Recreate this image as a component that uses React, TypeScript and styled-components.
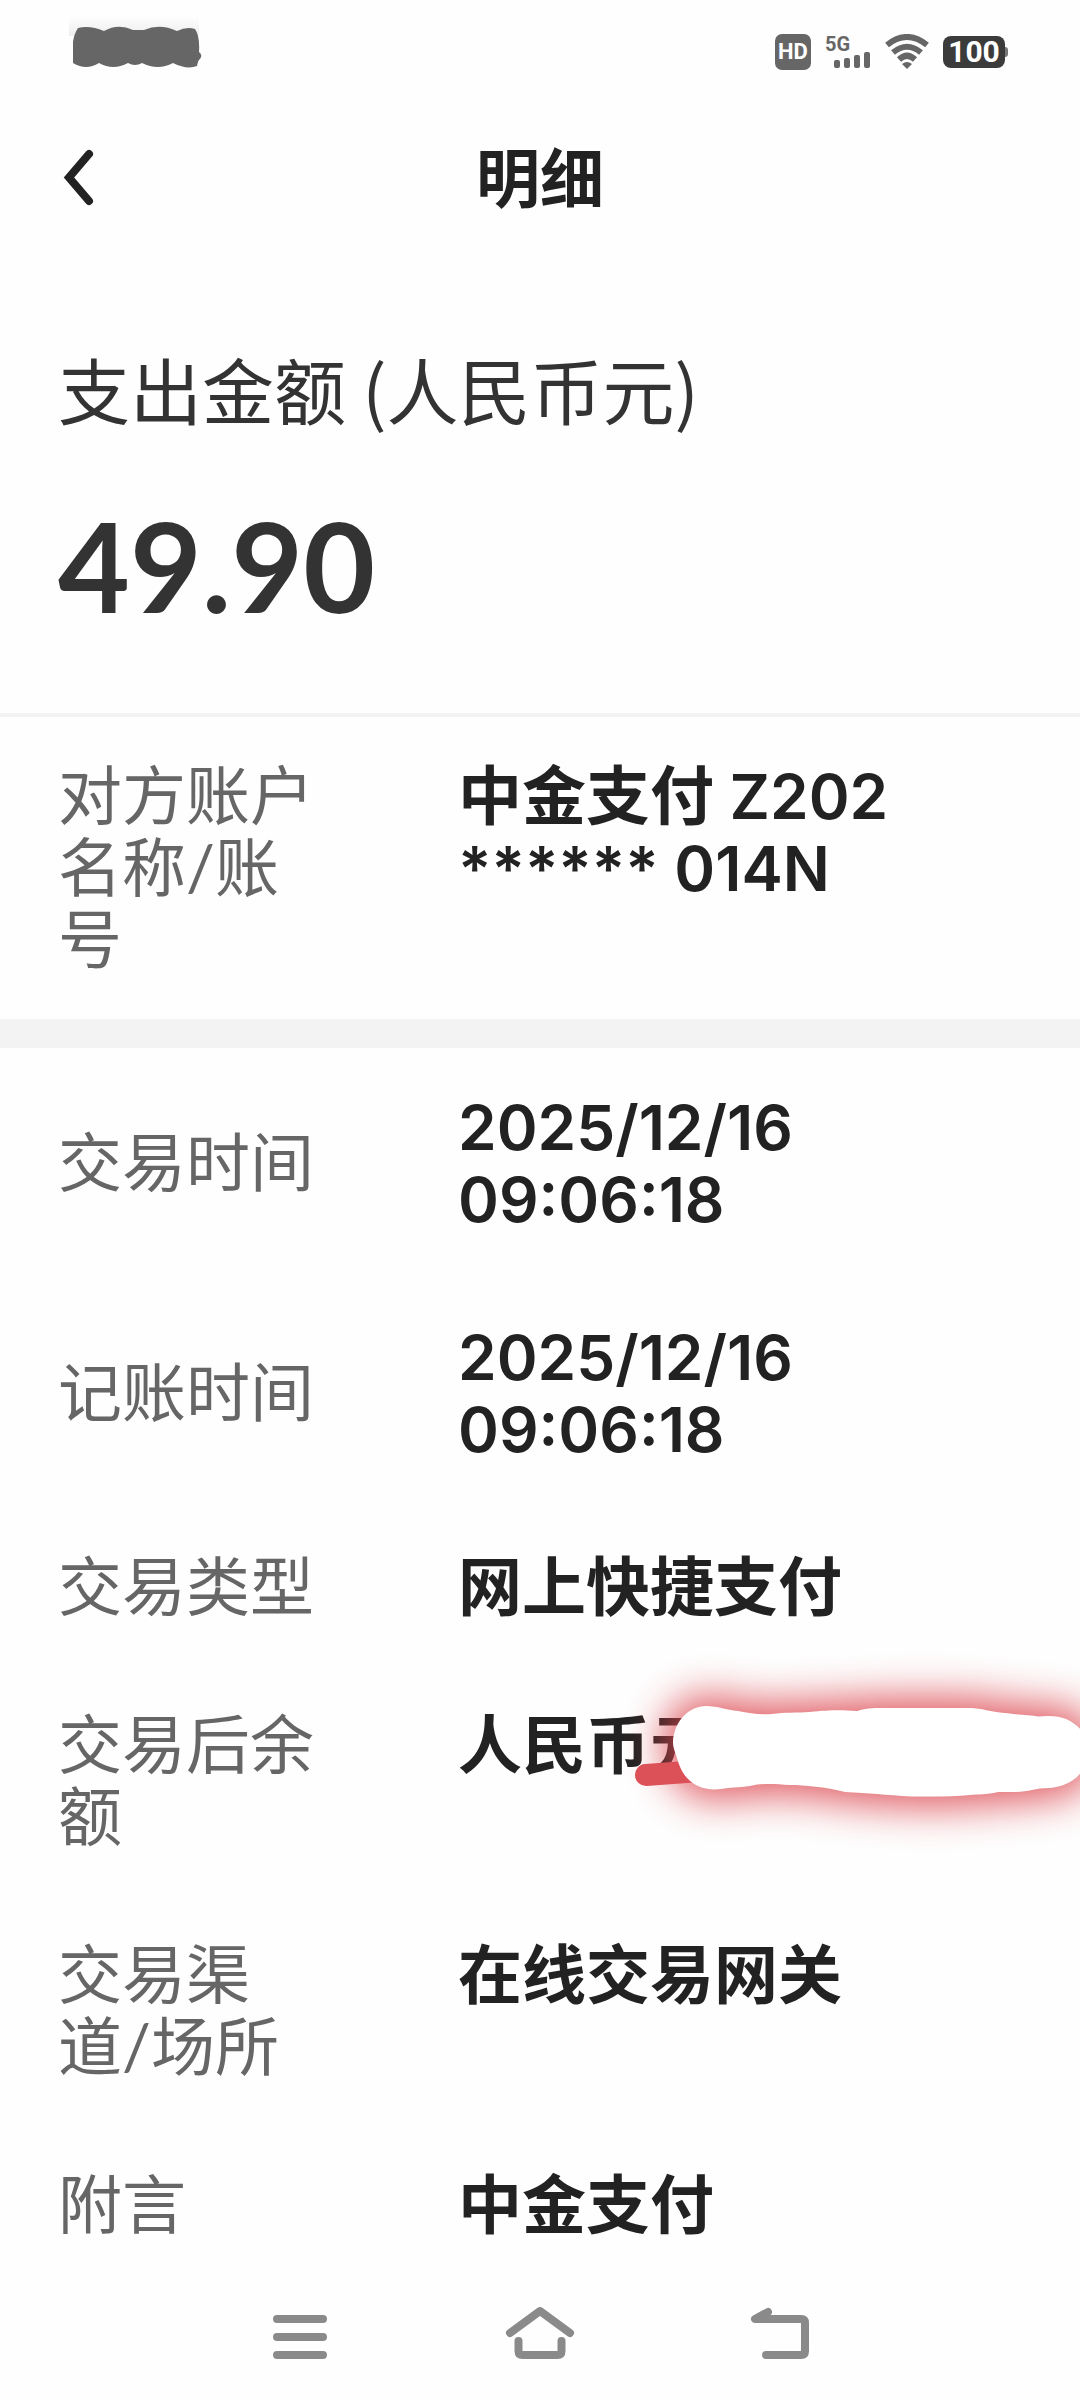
import React from "react";
import styled, { createGlobalStyle } from "styled-components";

const cjk = `"Noto Sans CJK SC", sans-serif`;
const mixed = `Lato, "Noto Sans CJK SC", sans-serif`;
const system = `Roboto, "Noto Sans CJK SC", sans-serif`;

const GlobalStyle = createGlobalStyle`
  *, *::before, *::after { box-sizing: border-box; }
  body { margin: 0; background: #fefefe; font-family: ${mixed}; }
`;

const Screen = styled.div`
  display: flex;
  flex-direction: column;
  min-height: 100vh;
  overflow: hidden;
`;

const StatusBar = styled.div`
  display: flex;
  align-items: center;
  justify-content: space-between;
  height: 104px;
  padding: 0 72px 0 68px;
  font-family: ${system};
  font-weight: 700;
  color: #666;
`;

const ClockSmudge = styled.svg`
  width: 136px;
  height: 56px;
  margin-bottom: 20px;
`;

const StatusIcons = styled.div`
  display: flex;
  align-items: center;
  gap: 14px;
`;

const HdBadge = styled.span`
  width: 36px;
  height: 36px;
  border-radius: 7px;
  background: #666;
  color: #fff;
  font-size: 22px;
  line-height: 36px;
  text-align: center;
`;

const Signal = styled.span`
  display: flex;
  flex-direction: column;
  width: 46px;
  font-size: 20px;
  line-height: 16px;
`;

const SignalBars = styled.span`
  display: flex;
  align-items: flex-end;
  gap: 4px;
  height: 16px;
  padding-left: 9px;
`;

const Bar = styled.i<{ $height: number }>`
  width: 6px;
  height: ${(p) => p.$height}px;
  border-radius: 2px;
  background: #666;
`;

const Wifi = styled.svg`
  width: 44px;
  height: 36px;
`;

const Battery = styled.span`
  display: flex;
  align-items: center;

  &::after {
    content: "";
    width: 3px;
    height: 10px;
    border-radius: 0 3px 3px 0;
    background: #777;
  }
`;

const BatteryLevel = styled.span`
  width: 62px;
  height: 32px;
  border-radius: 8px;
  background: #3b3b3b;
  color: #fff;
  font-size: 30px;
  line-height: 32px;
  text-align: center;
`;

const Header = styled.header`
  display: grid;
  grid-template-columns: 80px 1fr 80px;
  align-items: center;
  height: 148px;
  padding: 0 40px;
`;

const IconButton = styled.button`
  display: flex;
  align-items: center;
  justify-content: center;
  padding: 0;
  border: 0;
  background: none;
`;

const Title = styled.h1`
  margin: 0;
  font-size: 64px;
  line-height: 72px;
  font-weight: 700;
  text-align: center;
  color: #222;
`;

const Summary = styled.section`
  padding: 88px 58px 72px;
  border-bottom: 4px solid #f3f3f3;
  color: #333;
`;

const SummaryLabel = styled.p`
  margin: 0;
  font-family: ${cjk};
  font-size: 72px;
  line-height: 96px;
`;

const Amount = styled.p`
  margin: 53px 0 0;
  font-size: 124px;
  line-height: 152px;
  font-weight: 700;
`;

const Details = styled.dl`
  margin: 0;
`;

const Row = styled.div<{ $centered?: boolean; $divided?: boolean }>`
  display: grid;
  grid-template-columns: 264px 1fr;
  column-gap: 136px;
  align-items: ${(p) => (p.$centered ? "center" : "start")};
  padding: 42px 58px 44px;
  border-bottom: ${(p) => (p.$divided ? "29px solid #f3f3f3" : "0")};
  font-size: 64px;
  line-height: 72px;
`;

const Label = styled.dt`
  color: #666;
`;

const Value = styled.dd`
  position: relative;
  margin: 0;
  font-weight: 700;
  color: #222;
`;

const Code = styled.span`
  font-family: Inter, sans-serif;
  font-size: 62px;
  line-height: 60px;
  font-weight: 600;
`;

const Scribble = styled.svg`
  position: absolute;
  top: -98px;
  left: 142px;
  width: 480px;
  height: 280px;
`;

const NavBar = styled.nav`
  display: flex;
  justify-content: center;
  gap: 168px;
  padding: 17px 0 27px;
`;

const NavIcon = styled.svg`
  width: 72px;
  height: 72px;
  fill: none;
  stroke: #8a8a8a;
  stroke-width: 8;
  stroke-linecap: round;
  stroke-linejoin: round;
`;

const coverShape =
  "M73 92C74 70 90 56 106 56C118 56 126 60 138 61C150 63 160 65 172 64C185 62 196 63 210 62C230 60 240 60 257 61C268 57 280 58 300 58H370C382 58 390 62 405 63C418 65 430 65 438 66.500C460 64 474 69 484 84V118C476 132 462 137 449 138C435 138 428 142 415 142H398C386 145 378 144 370 145C352 147 330 146.500 312 146.500C284 145 270 143 245 142C225 137 205 135 190 135C175 134 163 133 150 136C138 138 130 137 121 139C96 142 82 128 77 108C75 101 73 98 73 92Z";

function BalanceCover() {
  return (
    <Scribble viewBox="0 -40 480 280" aria-hidden="true">
      <defs>
        <filter id="glow" x="-30%" y="-100%" width="160%" height="300%" colorInterpolationFilters="sRGB">
          <feGaussianBlur stdDeviation="20" />
        </filter>
      </defs>
      <path
        d={coverShape}
        fill="#dc464e"
        stroke="#dc464e"
        strokeWidth="20"
        opacity="0.9"
        filter="url(#glow)"
      />
      <path d="M46 125L100 121" stroke="#dc5158" strokeWidth="22" strokeLinecap="round" />
      <path d={coverShape} fill="#fff" />
    </Scribble>
  );
}

export default function App() {
  return (
    <>
      <GlobalStyle />
      <Screen>
        <StatusBar>
          <ClockSmudge viewBox="0 0 136 56" aria-hidden="true">
            <defs>
              <linearGradient id="haze" x1="0" y1="0" x2="0" y2="1">
                <stop offset="0" stopColor="#fcfcfc" />
                <stop offset="1" stopColor="#eeeeee" />
              </linearGradient>
            </defs>
            <path d="M1 4H131V22H1Z" fill="url(#haze)" />
            <path
              d="M10 14Q22 11 36 17Q50 9 65 16H76Q92 9 109 17Q119 12 127 15Q132 22 131 38Q135 41 132 45Q130 46 129 52Q119 56 105 49Q90 57 74 49Q67 53 60 49Q45 57 31 49Q18 57 5 49V28Q6 20 10 14Z"
              fill="#666"
            />
          </ClockSmudge>
          <StatusIcons>
            <HdBadge>HD</HdBadge>
            <Signal>
              5G
              <SignalBars>
                {[8, 10, 13, 16].map((h) => (
                  <Bar key={h} $height={h} />
                ))}
              </SignalBars>
            </Signal>
            <Wifi viewBox="0 0 44 36" fill="none" stroke="#666" strokeWidth="6" aria-hidden="true">
              <path d="M2 11Q22 -5 42 11" />
              <path d="M8 18.500Q22 7 36 18.500" />
              <path d="M14 25.500Q22 18 30 25.500" />
              <path d="M17 30Q22 26 27 30L22 35Z" fill="#666" stroke="none" />
            </Wifi>
            <Battery>
              <BatteryLevel>100</BatteryLevel>
            </Battery>
          </StatusIcons>
        </StatusBar>

        <Header>
          <IconButton type="button" aria-label="返回">
            <svg width="40" height="60" viewBox="0 0 40 60" fill="none" stroke="#222" strokeWidth="8" strokeLinecap="round">
              <path d="M29 6L9 29.500L29 53" />
            </svg>
          </IconButton>
          <Title>明细</Title>
        </Header>

        <Summary>
          <SummaryLabel>支出金额 (人民币元)</SummaryLabel>
          <Amount>49.90</Amount>
        </Summary>

        <Details>
          <Row $divided>
            <Label>对方账户名称/账号</Label>
            <Value>
              中金支付 <Code>Z202</Code>
              <br />
              <Code>****** 014N</Code>
            </Value>
          </Row>
          <Row $centered>
            <Label>交易时间</Label>
            <Value>
              <Code>2025/12/16</Code>
              <br />
              <Code>09:06:18</Code>
            </Value>
          </Row>
          <Row $centered>
            <Label>记账时间</Label>
            <Value>
              <Code>2025/12/16</Code>
              <br />
              <Code>09:06:18</Code>
            </Value>
          </Row>
          <Row>
            <Label>交易类型</Label>
            <Value>网上快捷支付</Value>
          </Row>
          <Row>
            <Label>交易后余额</Label>
            <Value>
              人民币元
              <BalanceCover />
            </Value>
          </Row>
          <Row>
            <Label>交易渠道/场所</Label>
            <Value>在线交易网关</Value>
          </Row>
          <Row>
            <Label>附言</Label>
            <Value>中金支付</Value>
          </Row>
        </Details>

        <NavBar>
          <IconButton type="button" aria-label="最近任务">
            <NavIcon viewBox="0 0 72 72">
              <path d="M13 18H59M13 36H59M13 54H59" />
            </NavIcon>
          </IconButton>
          <IconButton type="button" aria-label="主屏幕">
            <NavIcon viewBox="0 0 72 72">
              <path d="M6 32L36 10L66 32M14.500 40V50Q14.500 54 18.500 54H53.500Q57.500 54 57.500 50V40" />
            </NavIcon>
          </IconButton>
          <IconButton type="button" aria-label="返回上一级">
            <NavIcon viewBox="0 0 72 72">
              <path d="M24 11L11 18H57Q61 18 61 22V50Q61 54 57 54H22" />
              <path d="M11 18L24 11L22 18Z" fill="#8a8a8a" stroke="none" />
            </NavIcon>
          </IconButton>
        </NavBar>
      </Screen>
    </>
  );
}
